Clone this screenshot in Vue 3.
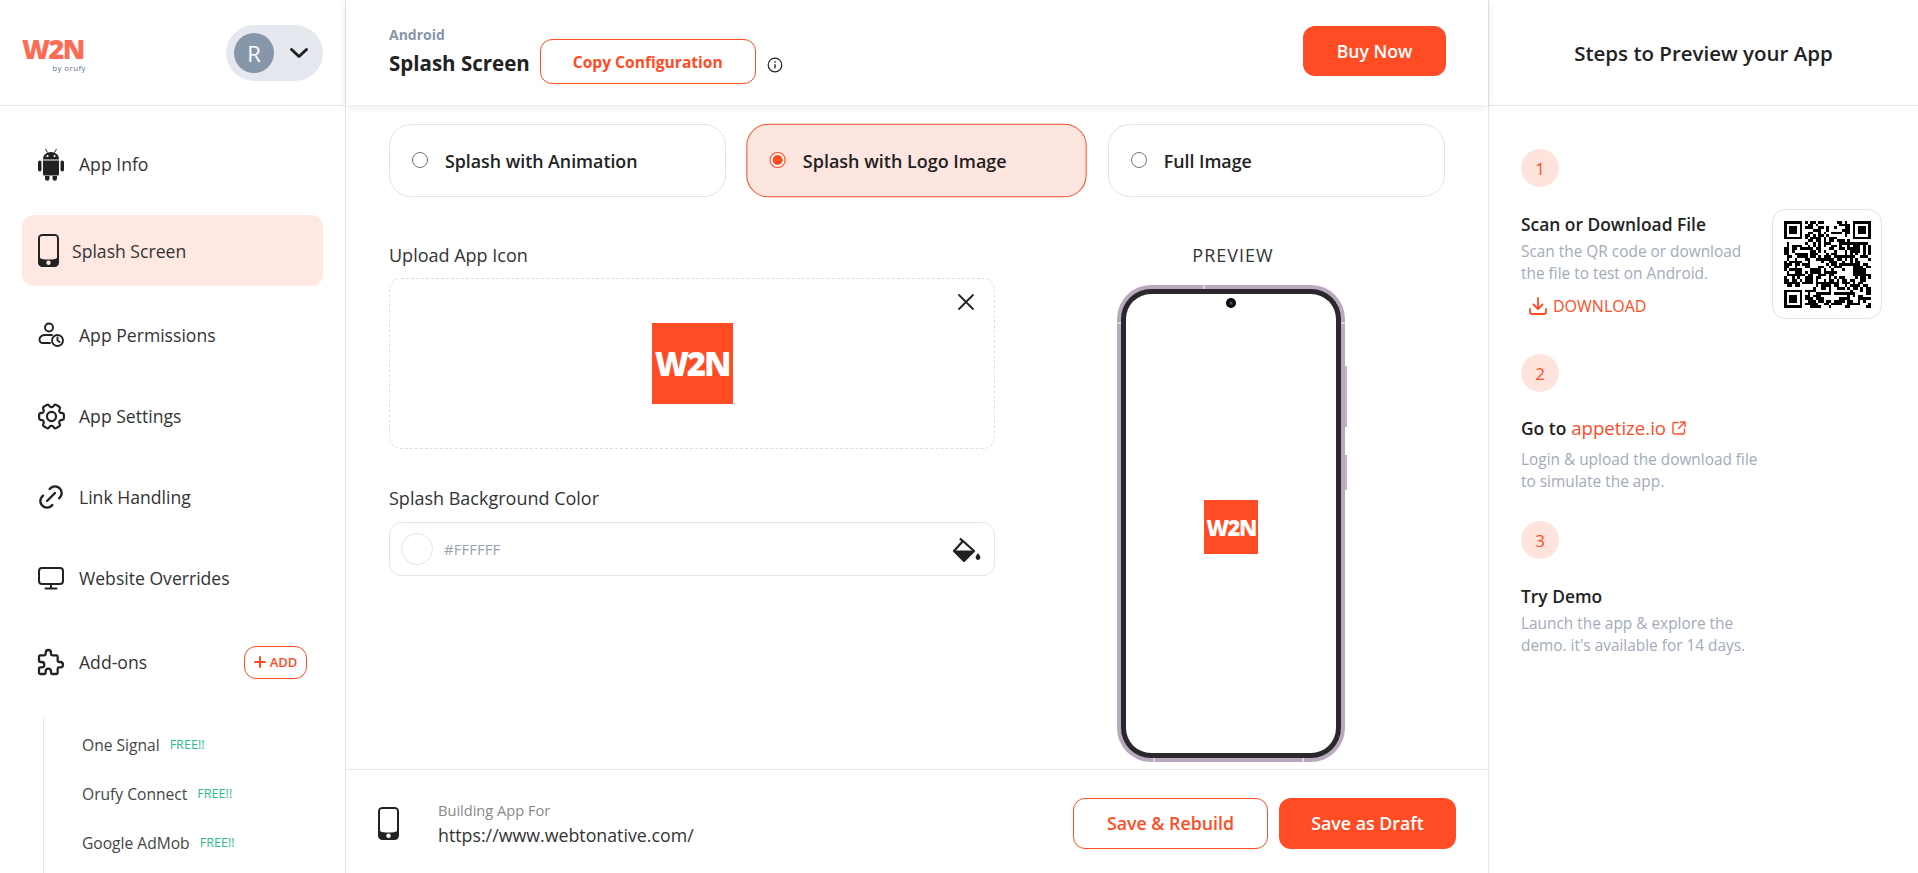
<template>
  <div class="app">
    <aside class="sidebar">
      <div class="side-top">
        <div class="logo">
          <div class="logo-mark">W2N</div>
          <div class="logo-by">by orufy</div>
        </div>
        <div class="user-pill">
          <div class="avatar">R</div>
          <svg width="20" height="12" viewBox="0 0 20 12" fill="none" stroke="#222" stroke-width="3" stroke-linecap="round" stroke-linejoin="round">
            <path d="M2.5 2.5 10 9.5l7.5-7" />
          </svg>
        </div>
      </div>

      <nav class="nav">
        <div class="nav-item first">
          <span class="nav-icon">
            <svg width="26" height="33" viewBox="0 0 26 33" fill="#222">
              <path d="M5 11.5C5 6.8 8.5 4 13 4s8 2.8 8 7.5Z" />
              <path d="M7.5 1l2 3.5M18.5 1l-2 3.5" stroke="#222" stroke-width="1" />
              <circle cx="9.5" cy="8" r="1.1" fill="#fff" />
              <circle cx="16.5" cy="8" r="1.1" fill="#fff" />
              <path d="M5 12.5h16V26a1.5 1.5 0 0 1-1.5 1.5h-13A1.5 1.5 0 0 1 5 26Z" />
              <rect x="0" y="12.5" width="3.5" height="11" rx="1.7" />
              <rect x="22.5" y="12.5" width="3.5" height="11" rx="1.7" />
              <path d="M7 28h4.5v2.5a2.2 2.2 0 0 1-4.5 0ZM14.5 28H19v2.5a2.2 2.2 0 0 1-4.5 0Z" />
            </svg>
          </span>
          <span>App Info</span>
        </div>

        <div class="nav-item active">
          <svg class="phone-icon" width="21" height="33" viewBox="0 0 21 33">
            <rect width="21" height="33" rx="4.5" fill="#222" />
            <path d="M4 2h13a2 2 0 0 1 2 2v20c-2 2-15 2-17 0V4a2 2 0 0 1 2-2Z" fill="#ffe8e2" />
            <circle cx="10.5" cy="28.8" r="2.2" fill="#ffe8e2" />
          </svg>
          <span>Splash Screen</span>
        </div>

        <div class="nav-item">
          <span class="nav-icon">
            <svg width="26" height="26" viewBox="0 0 26 26" fill="none" stroke="#222" stroke-width="1.9" stroke-linecap="round" stroke-linejoin="round">
              <circle cx="11" cy="5.5" r="4" />
              <path d="M14 13H7c-3 0-5.5 1.6-5.5 4.5 0 2.2 1.5 3.5 3.5 3.5h7" />
              <circle cx="19.5" cy="18.5" r="5.5" />
              <path d="M19.5 15.5v3l2 1.5" />
            </svg>
          </span>
          <span>App Permissions</span>
        </div>

        <div class="nav-item">
          <span class="nav-icon">
            <svg width="33" height="33" viewBox="0 0 24 24" fill="none" stroke="#222" stroke-width="1.6" stroke-linecap="round" stroke-linejoin="round">
              <g transform="rotate(90 12 12)">
                <path d="M9.594 3.94c.09-.542.56-.94 1.11-.94h2.593c.55 0 1.02.398 1.11.94l.213 1.281c.063.374.313.686.645.87.074.04.147.083.22.127.325.196.72.257 1.075.124l1.217-.456a1.125 1.125 0 0 1 1.37.49l1.296 2.247a1.125 1.125 0 0 1-.26 1.431l-1.003.827c-.293.241-.438.613-.43.992a7.723 7.723 0 0 1 0 .255c-.008.378.137.75.43.991l1.004.827c.424.35.534.955.26 1.43l-1.298 2.247a1.125 1.125 0 0 1-1.369.491l-1.217-.456c-.355-.133-.75-.072-1.076.124a6.47 6.47 0 0 1-.22.128c-.331.183-.581.495-.644.869l-.213 1.281c-.09.543-.56.94-1.11.94h-2.594c-.55 0-1.019-.398-1.11-.94l-.213-1.281c-.062-.374-.312-.686-.644-.87a6.52 6.52 0 0 1-.22-.127c-.325-.196-.72-.257-1.076-.124l-1.217.456a1.125 1.125 0 0 1-1.369-.49l-1.297-2.247a1.125 1.125 0 0 1 .26-1.431l1.004-.827c.292-.24.437-.613.43-.991a6.932 6.932 0 0 1 0-.255c.007-.38-.138-.751-.43-.992l-1.004-.827a1.125 1.125 0 0 1-.26-1.43l1.297-2.247a1.125 1.125 0 0 1 1.37-.491l1.216.456c.356.133.751.072 1.076-.124.072-.044.146-.086.22-.128.332-.183.582-.495.644-.869l.214-1.28Z" />
              </g>
              <circle cx="12" cy="12" r="3.3" />
            </svg>
          </span>
          <span>App Settings</span>
        </div>

        <div class="nav-item">
          <span class="nav-icon">
            <svg width="32" height="32" viewBox="0 0 24 24" fill="none" stroke="#222" stroke-width="1.8" stroke-linecap="round" stroke-linejoin="round">
              <path d="M9 15l6-6" />
              <path d="M11 6l.463-.536a5 5 0 0 1 7.071 7.072L18 13" />
              <path d="M13 18l-.397.534a5.068 5.068 0 0 1-7.127 0a4.972 4.972 0 0 1 0-7.071L6 11" />
            </svg>
          </span>
          <span>Link Handling</span>
        </div>

        <div class="nav-item">
          <span class="nav-icon">
            <svg width="26" height="23" viewBox="0 0 26 23" fill="none" stroke="#222" stroke-width="2" stroke-linecap="round">
              <rect x="1" y="1" width="24" height="16" rx="3" />
              <path d="M13 17v4M7.5 21.5h11" />
            </svg>
          </span>
          <span>Website Overrides</span>
        </div>

        <div class="nav-item addons">
          <span class="nav-icon">
            <svg width="32" height="32" viewBox="0 0 24 24" fill="none" stroke="#222" stroke-width="1.7" stroke-linecap="round" stroke-linejoin="round">
              <path d="M4 7h3a1 1 0 0 0 1-1v-1a2 2 0 0 1 4 0v1a1 1 0 0 0 1 1h3a1 1 0 0 1 1 1v3a1 1 0 0 0 1 1h1a2 2 0 0 1 0 4h-1a1 1 0 0 0-1 1v3a1 1 0 0 1-1 1h-3a1 1 0 0 1-1-1v-1a2 2 0 0 0-4 0v1a1 1 0 0 1-1 1h-3a1 1 0 0 1-1-1v-3a1 1 0 0 1 1-1h1a2 2 0 0 0 0-4h-1a1 1 0 0 1-1-1v-3a1 1 0 0 1 1-1" />
            </svg>
          </span>
          <span>Add-ons</span>
          <button class="add-btn">
            <svg width="12" height="12" viewBox="0 0 12 12" stroke="#ff4c25" stroke-width="2" stroke-linecap="round">
              <path d="M6 1v10M1 6h10" />
            </svg>
            ADD
          </button>
        </div>

        <div class="sub-list">
          <div v-for="addon in addons" :key="addon" class="sub-item">
            <span>{{ addon }}</span>
            <span class="free">FREE!!</span>
          </div>
        </div>
      </nav>
    </aside>

    <main class="main">
      <header class="main-head">
        <div class="title-wrap">
          <div class="platform">Android</div>
          <div class="page-title">Splash Screen</div>
        </div>
        <button class="copy-btn">Copy Configuration</button>
        <svg class="info" width="16" height="16" viewBox="0 0 16 16" fill="none" stroke="#222" stroke-width="1.2">
          <circle cx="8" cy="8" r="6.8" />
          <path d="M8 7.2v4" stroke-width="1.4" />
          <circle cx="8" cy="4.9" r=".8" fill="#222" stroke="none" />
        </svg>
        <button class="buy-btn">Buy Now</button>
      </header>

      <section class="content">
        <div class="choices">
          <label v-for="choice in choices" :key="choice.label" class="choice" :class="{ selected: choice.on }">
            <span class="radio"></span>
            {{ choice.label }}
          </label>
        </div>

        <div class="columns">
          <div class="form-col">
            <div class="field-label">Upload App Icon</div>
            <div class="upload-box">
              <svg class="close" width="18" height="18" viewBox="0 0 18 18" stroke="#222" stroke-width="1.8" stroke-linecap="round">
                <path d="M2 2l14 14M16 2 2 16" />
              </svg>
              <div class="app-logo">W2N</div>
            </div>

            <div class="field-label second">Splash Background Color</div>
            <div class="color-input">
              <span class="swatch"></span>
              <span class="hex">#FFFFFF</span>
              <svg class="bucket" width="28" height="25" viewBox="0 0 28 25" fill="#222">
                <path d="M7 1.5l3 3M10 4 21 14 11 24 1 14Z" fill="none" stroke="#222" stroke-width="2.2" stroke-linejoin="round" />
                <path d="M1 13.5h20L11 24.5Z" />
                <path d="M25 16c1.5 2 2.4 3.3 2.4 4.6a2.4 2.4 0 0 1-4.8 0c0-1.3.9-2.6 2.4-4.6Z" />
              </svg>
            </div>
          </div>

          <div class="preview-col">
            <div class="preview-label">PREVIEW</div>
            <div class="phone">
              <span class="side-key key-a"></span>
              <span class="side-key key-b"></span>
              <span class="band band-top"></span>
              <span class="band band-bl"></span>
              <span class="band band-br"></span>
              <span class="band band-lt"></span>
              <span class="band band-rt"></span>
              <div class="bezel">
                <div class="screen">
                  <span class="camera"></span>
                  <div class="screen-logo">W2N</div>
                </div>
              </div>
            </div>
          </div>
        </div>
      </section>

      <footer class="main-foot">
        <svg class="foot-phone" width="21" height="33" viewBox="0 0 21 33">
          <rect width="21" height="33" rx="4.5" fill="#222" />
          <path d="M4 2h13a2 2 0 0 1 2 2v20c-2 2-15 2-17 0V4a2 2 0 0 1 2-2Z" fill="#fff" />
          <circle cx="10.5" cy="28.8" r="2.2" fill="#fff" />
        </svg>
        <div class="build-for">
          <div class="build-label">Building App For</div>
          <div class="build-url">https://www.webtonative.com/</div>
        </div>
        <button class="rebuild-btn">Save &amp; Rebuild</button>
        <button class="draft-btn">Save as Draft</button>
      </footer>
    </main>

    <aside class="steps">
      <div class="steps-head">Steps to Preview your App</div>
      <div class="steps-body">
        <div class="step-num">1</div>
        <div class="step-row">
          <div class="step-text">
            <div class="step-title">Scan or Download File</div>
            <div class="step-desc">Scan the QR code or download<br />the file to test on Android.</div>
            <div class="download">
              <svg width="20" height="20" viewBox="0 0 20 20" fill="none" stroke="#ff4c25" stroke-width="1.8" stroke-linecap="round" stroke-linejoin="round">
                <path d="M2 13v3a2 2 0 0 0 2 2h12a2 2 0 0 0 2-2v-3M10 2v11M5.5 8.5 10 13l4.5-4.5" />
              </svg>
              DOWNLOAD
            </div>
          </div>
          <div class="qr-card">
            <svg width="87" height="87" viewBox="0 0 33 33" shape-rendering="crispEdges">
              <path :d="qrPath" fill="#000" />
            </svg>
          </div>
        </div>

        <div class="step-num">2</div>
        <div class="step-title go">
          Go to <span class="link">appetize.io</span>
          <svg width="16" height="16" viewBox="0 0 16 16" fill="none" stroke="#ff4c25" stroke-width="1.4" stroke-linecap="round" stroke-linejoin="round">
            <path d="M7 2.5H3.5A1.5 1.5 0 0 0 2 4v8.5A1.5 1.500 0 0 0 3.500 14H12a1.500 1.500 0 0 0 1.500-1.500V9M9.500 2H14v4.500M14 2 7.500 8.500" />
          </svg>
        </div>
        <div class="step-desc">Login &amp; upload the download file<br />to simulate the app.</div>

        <div class="step-num">3</div>
        <div class="step-title">Try Demo</div>
        <div class="step-desc">Launch the app &amp; explore the<br />demo. it's available for 14 days.</div>
      </div>
    </aside>
  </div>
</template>

<script setup>
const addons = ['One Signal', 'Orufy Connect', 'Google AdMob']

const choices = [
  { label: 'Splash with Animation', on: false },
  { label: 'Splash with Logo Image', on: true },
  { label: 'Full Image', on: false },
]

// fake qr: finder squares plus seeded noise, there is nothing to scan here
function buildQr() {
  const size = 33
  let seed = 20240
  let d = ''
  const inFinder = (x, y) => (x < 8 && y < 8) || (x > 24 && y < 8) || (x < 8 && y > 24)
  for (let y = 0; y < size; y++) {
    for (let x = 0; x < size; x++) {
      if (inFinder(x, y)) continue
      seed = (seed * 1103515245 + 12345) & 0x7fffffff
      if ((seed >> 16) % 100 < 52) d += `M${x} ${y}h1v1h-1z`
    }
  }
  const finder = (x, y) =>
    `M${x} ${y}h7v7h-7zM${x + 1} ${y + 1}v5h5v-5zM${x + 2} ${y + 2}h3v3h-3z`
  return d + finder(0, 0) + finder(26, 0) + finder(0, 26)
}

const qrPath = buildQr()
</script>

<style>
html,
body {
  margin: 0;
  background: #fff;
}
</style>

<style scoped>
.app {
  display: flex;
  height: 873px;
  overflow: hidden;
  font-family: "Open Sans", "Noto Sans", sans-serif;
  color: #222;
  background: #fff;
}

button {
  font-family: inherit;
  cursor: pointer;
}

/* left menu */
.sidebar {
  width: 345px;
  flex: none;
  border-right: 1px solid #e5e7eb;
  overflow: hidden;
}

.side-top {
  height: 105px;
  display: flex;
  align-items: center;
  justify-content: space-between;
  padding: 0 22px;
  border-bottom: 1px solid #e5e7eb;
}

.logo {
  width: 64px;
  display: flex;
  flex-direction: column;
  align-items: flex-end;
  margin-top: 3px;
}

.logo-mark {
  width: 64px;
  font-weight: 800;
  font-size: 27px;
  line-height: 26px;
  letter-spacing: -1.6px;
  color: #ff6a55;
  white-space: nowrap;
}

.logo-by {
  font-size: 8px;
  line-height: 11px;
  letter-spacing: 0.4px;
  color: #64748b;
  white-space: nowrap;
}

.user-pill {
  width: 97px;
  height: 56px;
  box-sizing: border-box;
  padding: 0 14px 0 8px;
  border-radius: 28px;
  background: #e5e8ee;
  display: flex;
  align-items: center;
  justify-content: space-between;
}

.avatar {
  width: 40px;
  height: 40px;
  border-radius: 50%;
  background: #8896a9;
  color: #fff;
  font-size: 22px;
  display: flex;
  align-items: center;
  justify-content: center;
}

.nav {
  display: flex;
  flex-direction: column;
  padding: 23px 22px 0;
}

.nav-item {
  height: 70px;
  flex: none;
  margin-bottom: 11px;
  display: flex;
  align-items: center;
  gap: 15px;
  padding-left: 16px;
  font-size: 17.6px;
  color: #333;
}

.nav-item svg {
  flex: none;
}

.nav-item.first {
  margin-bottom: 16px;
}

.nav-item.active {
  height: 71px;
  margin-bottom: 14px;
  border-radius: 12px;
  background: #ffe8e2;
  gap: 13px;
}

.nav-item.addons {
  margin-top: 3px;
  margin-bottom: 0;
}

.nav-icon {
  width: 26px;
  height: 34px;
  flex: none;
  display: flex;
  align-items: center;
  justify-content: center;
}

.add-btn {
  margin-left: auto;
  margin-right: 16px;
  width: 63px;
  height: 33px;
  border: 1px solid #ff4c25;
  border-radius: 12px;
  background: #fff;
  color: #ff4c25;
  font-size: 13px;
  font-weight: 600;
  display: flex;
  align-items: center;
  justify-content: center;
  gap: 4px;
  padding: 0;
}

.sub-list {
  margin-left: 21px;
  margin-top: 21px;
  padding-left: 38px;
  padding-top: 2px;
  border-left: 1px solid #e5e7eb;
  height: 200px;
  flex: none;
}

.sub-item {
  height: 49px;
  display: flex;
  align-items: center;
  gap: 10px;
  font-size: 15.6px;
  color: #444;
}

.free {
  font-size: 12.6px;
  color: #2ebc8a;
}

/* middle */
.main {
  flex: 1;
  min-width: 0;
  display: flex;
  flex-direction: column;
  border-right: 1px solid #e5e7eb;
}

.main-head {
  height: 105px;
  flex: none;
  display: flex;
  align-items: center;
  padding: 0 42px 0 43px;
  position: relative;
  z-index: 1;
  box-shadow: 0 2px 8px rgba(0, 0, 0, 0.1);
  background: #fff;
}

.platform {
  font-size: 14px;
  font-weight: 700;
  line-height: 20px;
  color: #8896a9;
}

.page-title {
  font-size: 20.5px;
  font-weight: 700;
  line-height: 36px;
  color: #222;
  white-space: nowrap;
}

.copy-btn {
  width: 216px;
  height: 45px;
  margin-left: 10px;
  margin-top: 18px;
  border: 1px solid #ff4c25;
  border-radius: 12px;
  background: #fff;
  color: #ff4c25;
  font-size: 15.6px;
  font-weight: 700;
  padding: 0;
}

.info {
  margin-left: 11px;
  margin-top: 25px;
}

.buy-btn {
  margin-left: auto;
  margin-top: -3px;
  width: 143px;
  height: 50px;
  border: 0;
  border-radius: 12px;
  background: #ff4c25;
  color: #fff;
  font-size: 17.6px;
  font-weight: 600;
}

.content {
  flex: 1;
  min-height: 0;
  padding: 19px 43px 0;
  overflow: hidden;
}

.choices {
  display: grid;
  grid-template-columns: repeat(3, 1fr);
  gap: 22px;
}

.choice {
  height: 73px;
  box-sizing: border-box;
  border: 1px solid #e2e4ea;
  border-radius: 22px;
  display: flex;
  align-items: center;
  padding-left: 22px;
  gap: 17px;
  font-size: 17.8px;
  font-weight: 600;
  color: #222;
}

.choice.selected {
  background: #fde5e0;
  border-color: #ff4c25;
  transform: scale(1.01);
}

.radio {
  width: 16px;
  height: 16px;
  box-sizing: border-box;
  border: 1.5px solid #757575;
  border-radius: 50%;
  margin-top: -2px;
  background: #fff;
}

.selected .radio {
  border-color: #ff4c25;
  box-shadow: inset 0 0 0 2px #fff, inset 0 0 0 8px #ff4c25;
}

.columns {
  display: grid;
  grid-template-columns: 606px 1fr;
  gap: 26px;
  margin-top: 46px;
}

.field-label {
  font-size: 18px;
  line-height: 24px;
  color: #333;
  margin-bottom: 11px;
}

.field-label.second {
  margin-top: 37px;
  margin-bottom: 12px;
}

.upload-box {
  height: 171px;
  box-sizing: border-box;
  border: 1px dashed #dcdfe6;
  border-radius: 12px;
  display: flex;
  align-items: center;
  justify-content: center;
  position: relative;
}

.close {
  position: absolute;
  top: 14px;
  right: 19px;
}

.app-logo,
.screen-logo {
  background: #ff4c25;
  color: #fff;
  font-weight: 800;
  display: flex;
  align-items: center;
  justify-content: center;
  white-space: nowrap;
}

.app-logo {
  width: 81px;
  height: 81px;
  font-size: 33px;
  letter-spacing: -2.2px;
}

.color-input {
  height: 54px;
  box-sizing: border-box;
  border: 1px solid #e2e4ea;
  border-radius: 12px;
  display: flex;
  align-items: center;
  padding: 0 13px 0 11px;
}

.swatch {
  width: 32px;
  height: 32px;
  box-sizing: border-box;
  border: 1px solid #e2e4ea;
  border-radius: 50%;
  background: #fff;
}

.hex {
  margin-left: 11px;
  font-size: 15px;
  color: #9aa2b1;
}

.bucket {
  margin-left: auto;
}

.preview-col {
  display: flex;
  flex-direction: column;
  align-items: center;
}

.preview-label {
  font-size: 18px;
  line-height: 24px;
  letter-spacing: 1px;
  color: #333;
  margin-bottom: 18px;
}

.phone {
  width: 228px;
  height: 477px;
  box-sizing: border-box;
  padding: 4px;
  margin-right: 4px;
  border-radius: 34px;
  background: #b9a9bd;
  position: relative;
  flex: none;
}

.side-key {
  position: absolute;
  right: -2px;
  width: 2px;
  background: #c4b6c8;
}

.key-a {
  top: 81px;
  height: 61px;
}

.key-b {
  top: 170px;
  height: 35px;
}

/* pale antenna ticks on the metal frame */
.band {
  position: absolute;
  background: #ddd3e0;
}

.band-top {
  top: 0;
  left: 86px;
  width: 2px;
  height: 4px;
}

.band-bl {
  bottom: 0;
  left: 36px;
  width: 2px;
  height: 4px;
}

.band-br {
  bottom: 0;
  right: 41px;
  width: 2px;
  height: 4px;
}

.band-lt {
  top: 37px;
  left: 0;
  width: 4px;
  height: 2px;
}

.band-rt {
  top: 37px;
  right: 0;
  width: 4px;
  height: 2px;
}

.bezel {
  height: 100%;
  box-sizing: border-box;
  padding: 5px;
  border-radius: 30px;
  background: #2a282c;
}

.screen {
  height: 100%;
  border-radius: 25px;
  background: #fff;
  display: flex;
  align-items: center;
  justify-content: center;
  position: relative;
}

.camera {
  position: absolute;
  top: 4px;
  left: 100px;
  width: 10px;
  height: 10px;
  border-radius: 50%;
  background: radial-gradient(circle, #55657a 0, #0a0a12 2.5px, #05050a 5px);
}

.screen-logo {
  width: 54px;
  height: 54px;
  margin-top: 7px;
  font-size: 22px;
  letter-spacing: -1.5px;
}

.main-foot {
  height: 104px;
  box-sizing: border-box;
  flex: none;
  border-top: 1px solid #e5e7eb;
  display: flex;
  align-items: center;
  padding: 0 32px;
}

.foot-phone {
  flex: none;
  margin-top: 3px;
}

.build-for {
  margin-left: 39px;
  margin-top: 7px;
}

.build-label {
  font-size: 14.6px;
  line-height: 20px;
  color: #888;
}

.build-url {
  font-size: 17.8px;
  line-height: 31px;
  color: #333;
}

.rebuild-btn,
.draft-btn {
  width: 177px;
  height: 51px;
  border-radius: 12px;
  font-size: 17.8px;
  font-weight: 600;
  padding: 0;
  margin-top: 3px;
}

.rebuild-btn {
  width: 195px;
  margin-left: auto;
  border: 1px solid #ff4c25;
  background: #fff;
  color: #ff4c25;
}

.draft-btn {
  margin-left: 11px;
  border: 0;
  background: #ff4c25;
  color: #fff;
}

/* right panel */
.steps {
  width: 429px;
  flex: none;
}

.steps-head {
  height: 105px;
  border-bottom: 1px solid #e5e7eb;
  display: flex;
  align-items: center;
  justify-content: center;
  font-size: 20.5px;
  font-weight: 600;
  color: #222;
}

.steps-body {
  padding: 43px 36px 0 32px;
}

.step-num {
  width: 38px;
  height: 38px;
  border-radius: 50%;
  background: #ffe3dd;
  color: #ff4c25;
  font-size: 17px;
  display: flex;
  align-items: center;
  justify-content: center;
}

.step-row {
  display: flex;
  justify-content: space-between;
  margin-bottom: 35px;
}

.step-text {
  margin-top: 25px;
}

.step-title {
  font-size: 17.4px;
  font-weight: 600;
  line-height: 24px;
  color: #222;
}

.step-desc {
  font-size: 15.4px;
  line-height: 22px;
  color: #a3aab8;
  margin-top: 5px;
}

.step-desc + .step-num {
  margin-top: 28px;
}

.step-num + .step-title {
  margin-top: 25px;
}

.step-num + .step-title.go {
  margin-top: 24px;
  margin-bottom: 9px;
}

.download {
  display: flex;
  align-items: center;
  gap: 5px;
  margin-top: 10px;
  padding-left: 7px;
  font-size: 16px;
  font-weight: 500;
  color: #ff4c25;
}

.qr-card {
  width: 110px;
  height: 110px;
  margin-top: 22px;
  box-sizing: border-box;
  border: 1px solid #e2e4ea;
  border-radius: 14px;
  display: flex;
  align-items: center;
  justify-content: center;
}

.step-title.go {
  display: flex;
  align-items: center;
  gap: 5px;
}

.link {
  color: #ff4c25;
  font-size: 18.6px;
  font-weight: 500;
}
</style>
